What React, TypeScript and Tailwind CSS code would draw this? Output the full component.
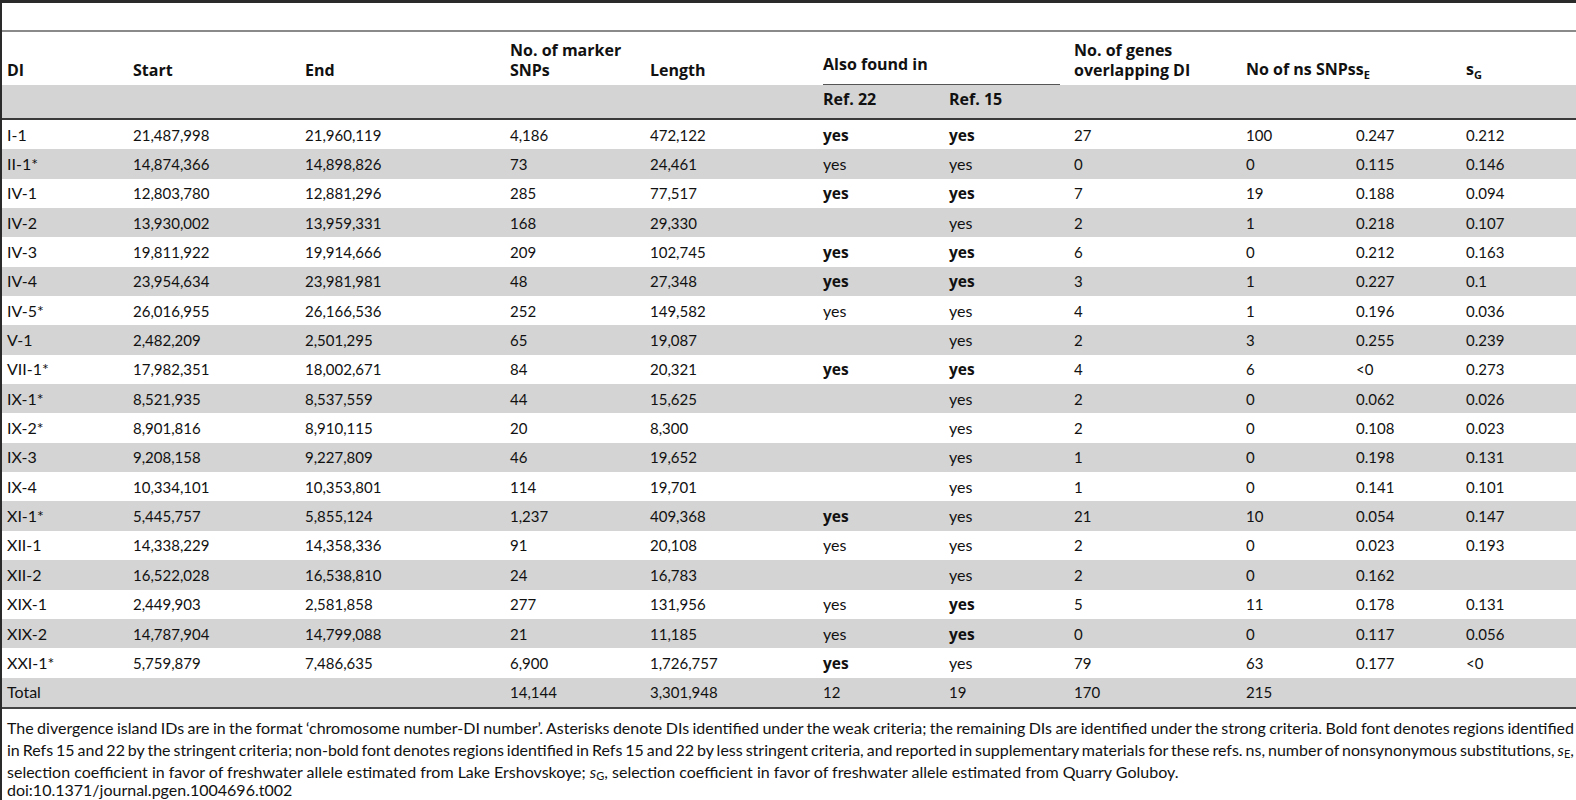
import React from "react";

const GRID =
  "grid grid-cols-[126px_172px_205px_140px_173px_126px_125px_172px_110px_110px_1fr]";

const rows: string[][] = [
  ["I-1", "21,487,998", "21,960,119", "4,186", "472,122", "!yes", "!yes", "27", "100", "0.247", "0.212"],
  ["II-1*", "14,874,366", "14,898,826", "73", "24,461", "yes", "yes", "0", "0", "0.115", "0.146"],
  ["IV-1", "12,803,780", "12,881,296", "285", "77,517", "!yes", "!yes", "7", "19", "0.188", "0.094"],
  ["IV-2", "13,930,002", "13,959,331", "168", "29,330", "", "yes", "2", "1", "0.218", "0.107"],
  ["IV-3", "19,811,922", "19,914,666", "209", "102,745", "!yes", "!yes", "6", "0", "0.212", "0.163"],
  ["IV-4", "23,954,634", "23,981,981", "48", "27,348", "!yes", "!yes", "3", "1", "0.227", "0.1"],
  ["IV-5*", "26,016,955", "26,166,536", "252", "149,582", "yes", "yes", "4", "1", "0.196", "0.036"],
  ["V-1", "2,482,209", "2,501,295", "65", "19,087", "", "yes", "2", "3", "0.255", "0.239"],
  ["VII-1*", "17,982,351", "18,002,671", "84", "20,321", "!yes", "!yes", "4", "6", "<0", "0.273"],
  ["IX-1*", "8,521,935", "8,537,559", "44", "15,625", "", "yes", "2", "0", "0.062", "0.026"],
  ["IX-2*", "8,901,816", "8,910,115", "20", "8,300", "", "yes", "2", "0", "0.108", "0.023"],
  ["IX-3", "9,208,158", "9,227,809", "46", "19,652", "", "yes", "1", "0", "0.198", "0.131"],
  ["IX-4", "10,334,101", "10,353,801", "114", "19,701", "", "yes", "1", "0", "0.141", "0.101"],
  ["XI-1*", "5,445,757", "5,855,124", "1,237", "409,368", "!yes", "yes", "21", "10", "0.054", "0.147"],
  ["XII-1", "14,338,229", "14,358,336", "91", "20,108", "yes", "yes", "2", "0", "0.023", "0.193"],
  ["XII-2", "16,522,028", "16,538,810", "24", "16,783", "", "yes", "2", "0", "0.162", ""],
  ["XIX-1", "2,449,903", "2,581,858", "277", "131,956", "yes", "!yes", "5", "11", "0.178", "0.131"],
  ["XIX-2", "14,787,904", "14,799,088", "21", "11,185", "yes", "!yes", "0", "0", "0.117", "0.056"],
  ["XXI-1*", "5,759,879", "7,486,635", "6,900", "1,726,757", "!yes", "yes", "79", "63", "0.177", "<0"],
  ["Total", "", "", "14,144", "3,301,948", "12", "19", "170", "215", "", ""],
];

function Cell({ v, first }: { v: string; first: boolean }) {
  if (v.startsWith("!")) {
    return (
      <div className="font-['Open_Sans',sans-serif] font-bold text-[15.5px]">{v.slice(1)}</div>
    );
  }
  if (first) {
    return <div className="text-[16px]">{v}</div>;
  }
  return <div>{v}</div>;
}

export default function App() {
  return (
    <div className="w-[1576px] h-[800px] overflow-hidden bg-white border-l-2 border-t-[3px] border-[#2a2a2a] text-[#111] font-['Lato',sans-serif]">
      <div className="h-[27px]" />
      <div className="h-[2px] bg-[#8a8a8a]" />

      {/* header row 1 */}
      <div
        className={`${GRID} h-[53px] pl-[5px] font-['Open_Sans',sans-serif] font-bold text-[16px] leading-[20px] text-[#111]`}
      >
        <div className="self-end pb-[5px]">DI</div>
        <div className="self-end pb-[5px]">Start</div>
        <div className="self-end pb-[5px]">End</div>
        <div className="self-end pb-[5px]">
          No. of marker
          <br />
          SNPs
        </div>
        <div className="self-end pb-[5px]">Length</div>
        <div className="col-span-2 flex flex-col justify-end">
          <div>Also found in</div>
          <div className="mt-[10px] mr-[14px] h-px bg-[#555]" />
        </div>
        <div className="self-end pb-[5px]">
          No. of genes
          <br />
          overlapping DI
        </div>
        <div className="col-span-2 self-end pb-[5px]">
          No of ns SNPss
          <span className="text-[11px] leading-none align-[-4px]">E</span>
        </div>
        <div className="self-end pb-[5px]">
          s<span className="text-[11px] leading-none align-[-4px]">G</span>
        </div>
      </div>

      {/* header row 2 */}
      <div
        className={`${GRID} h-[33px] pl-[5px] pb-[5px] items-center bg-[#d4d4d4] font-['Open_Sans',sans-serif] font-bold text-[16px] leading-[20px]`}
      >
        <div />
        <div />
        <div />
        <div />
        <div />
        <div>Ref. 22</div>
        <div>Ref. 15</div>
      </div>
      <div className="h-[2px] bg-[#3a3a3a]" />

      {/* body */}
      {rows.map((r, i) => (
        <div
          key={i}
          className={
            i % 2 === 1
              ? `${GRID} h-[29.35px] items-center pl-[5px] bg-[#d4d4d4] text-[15px] leading-[20px]`
              : `${GRID} h-[29.35px] items-center pl-[5px] text-[15px] leading-[20px]`
          }
        >
          {r.map((v, j) => (
            <Cell key={j} v={v} first={j === 0 || v === "yes"} />
          ))}
        </div>
      ))}
      <div className="h-[2px] bg-[#444]" />

      {/* caption */}
      <div className="pl-[5px] pr-[2px] pt-[8px] text-[16px] leading-[22px] text-[#111]">
        <div className="text-justify [text-align-last:justify] [word-spacing:-1px]">
          The divergence island IDs are in the format ‘chromosome number-DI number’. Asterisks
          denote DIs identified under the weak criteria; the remaining DIs are identified under the
          strong criteria. Bold font denotes regions identified
        </div>
        <div className="text-justify [text-align-last:justify] [word-spacing:-3px]">
          in Refs 15 and 22 by the stringent criteria; non-bold font denotes regions identified in
          Refs 15 and 22 by less stringent criteria, and reported in supplementary materials for
          these refs. ns, number of nonsynonymous substitutions,{" "}
          <span className="whitespace-nowrap">
            <i>s</i>
            <span className="text-[11px] leading-none align-[-2px]">E</span>,
          </span>
        </div>
        <div className="whitespace-nowrap">
          selection coefficient in favor of freshwater allele estimated from Lake Ershovskoye;{" "}
          <i>s</i>
          <span className="text-[11px] leading-none align-[-2px]">G</span>, selection coefficient in
          favor of freshwater allele estimated from Quarry Goluboy.
        </div>
        <div className="leading-[14px]">doi:10.1371/journal.pgen.1004696.t002</div>
      </div>
    </div>
  );
}
